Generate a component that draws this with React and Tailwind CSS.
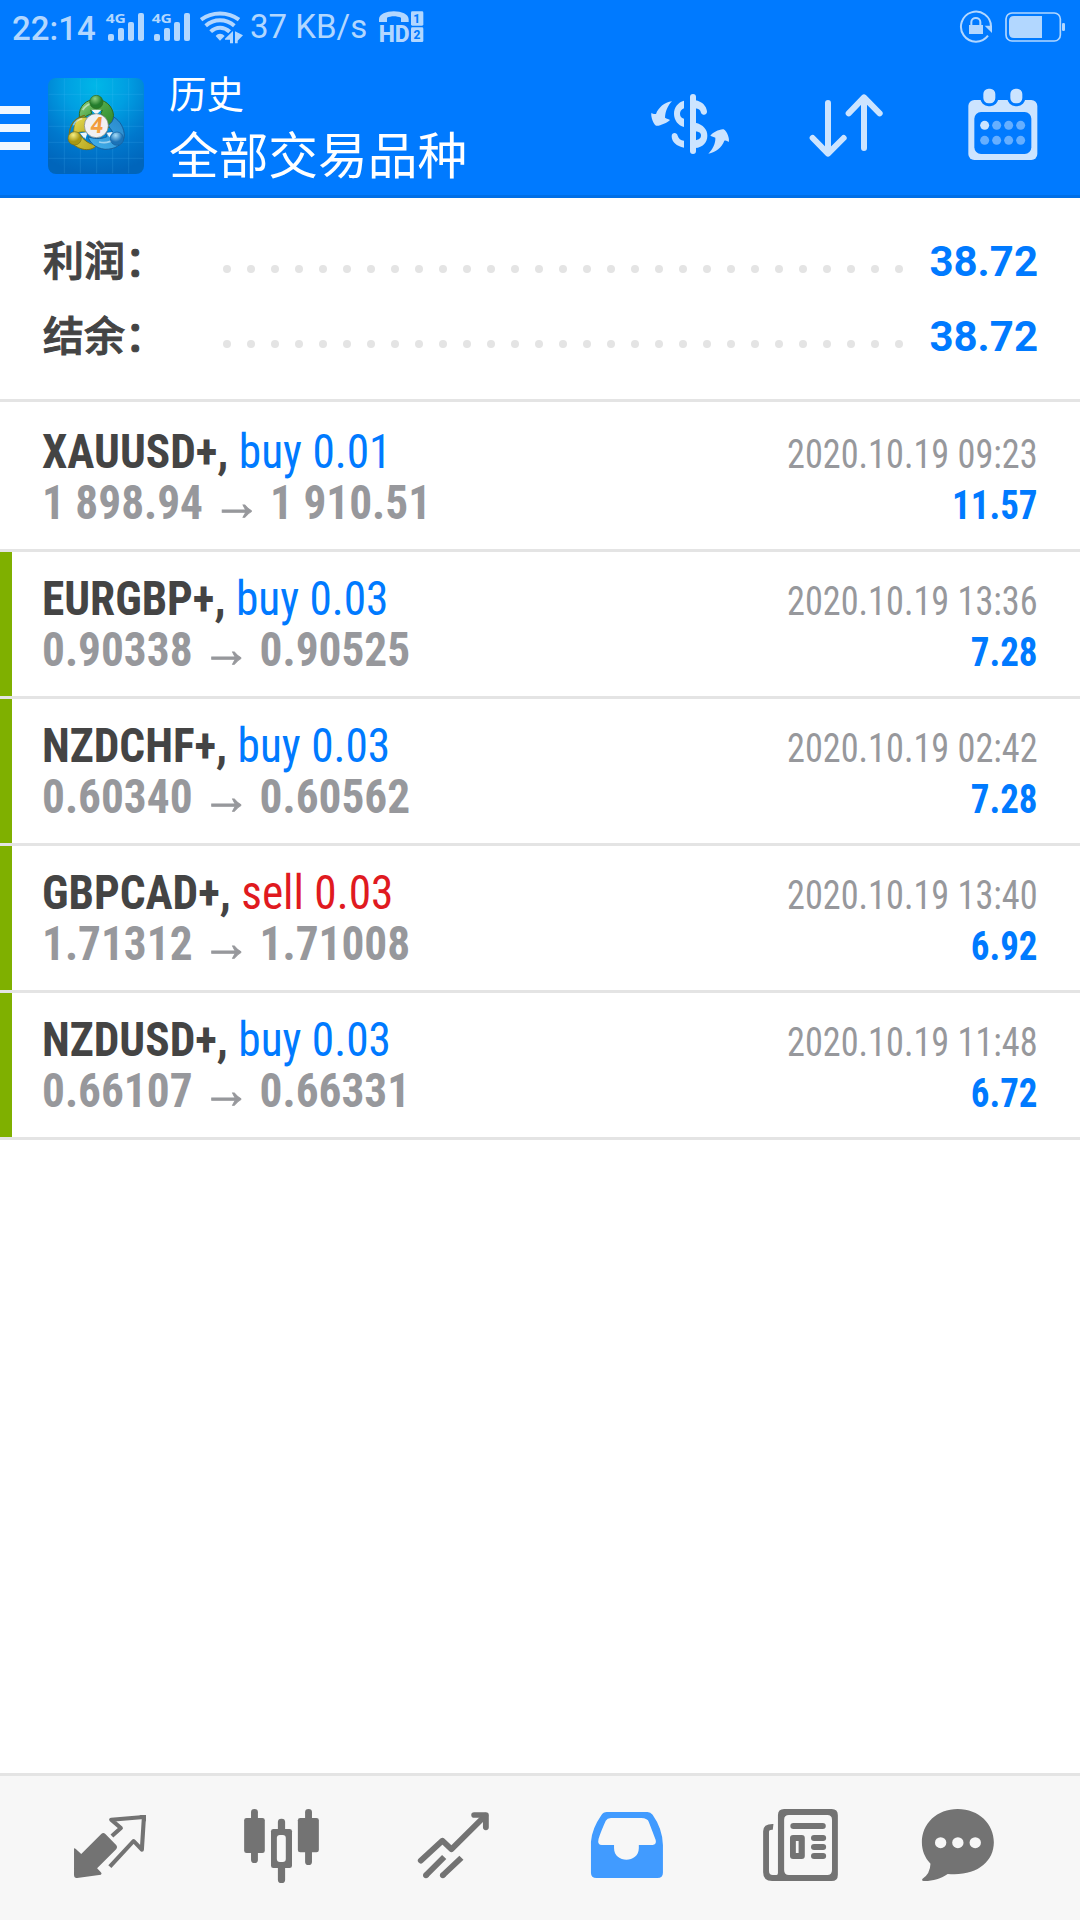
const trades = [
  { symbol: 'XAUUSD+,', side: 'buy', lot: '0.01', open: '1 898.94', close: '1 910.51', time: '2020.10.19 09:23', profit: '11.57' },
  { symbol: 'EURGBP+,', side: 'buy', lot: '0.03', open: '0.90338', close: '0.90525', time: '2020.10.19 13:36', profit: '7.28', marked: true },
  { symbol: 'NZDCHF+,', side: 'buy', lot: '0.03', open: '0.60340', close: '0.60562', time: '2020.10.19 02:42', profit: '7.28', marked: true },
  { symbol: 'GBPCAD+,', side: 'sell', lot: '0.03', open: '1.71312', close: '1.71008', time: '2020.10.19 13:40', profit: '6.92', marked: true },
  { symbol: 'NZDUSD+,', side: 'buy', lot: '0.03', open: '0.66107', close: '0.66331', time: '2020.10.19 11:48', profit: '6.72', marked: true },
];

function Signal() {
  return (
    <svg className="h-[54px] w-[46px] shrink-0" viewBox="312 0 138 162" fill="#b2d7ff">
      <text x="317" y="69" fontFamily="Open Sans" fontWeight="700" fontSize="39" textLength="61" lengthAdjust="spacingAndGlyphs">4G</text>
      <rect x="324" y="102" width="18" height="21" rx="6" />
      <rect x="354" y="84" width="18" height="39" rx="6" />
      <rect x="384" y="66" width="18" height="57" rx="6" />
      <rect x="414" y="39" width="18" height="84" rx="6" />
    </svg>
  );
}

function Wifi() {
  return (
    <svg className="h-[54px] w-[44px] shrink-0" viewBox="600 0 132 162" fill="none" stroke="#b2d7ff" strokeWidth="12">
      <path d="M603 59C636 34 684 34 717 59" />
      <path d="M617 77C643 55 677 55 703 77" />
      <path d="M632 95C649 79 671 79 689 95" />
      <path d="M647 108C655 99 665 99 674 108L660 122Z" fill="#b2d7ff" stroke="none" />
      <path d="M668 120L701 84H732V135H680V120Z" fill="#007aff" stroke="none" />
      <path d="M675 116L699 93V130H690V119H675ZM705 130V94L729 106L713 122V130Z" fill="#b2d7ff" stroke="none" />
    </svg>
  );
}

function HdCall() {
  return (
    <svg className="h-[54px] w-[46px] shrink-0" viewBox="1137 0 138 162" fill="#b2d7ff">
      <path d="M1137 66V58C1137 26 1226 26 1226 58V66H1203V53C1190 47 1173 47 1161 53V66Z" />
      <text x="1136" y="126" fontFamily="Roboto" fontWeight="800" fontSize="72" textLength="93" lengthAdjust="spacingAndGlyphs">HD</text>
      <rect x="1233" y="34" width="37" height="43" rx="4" />
      <rect x="1233" y="82" width="37" height="44" rx="4" />
      <text x="1250" y="68" textAnchor="middle" fontFamily="Roboto" fontWeight="800" fontSize="36" fill="#007aff">1</text>
      <text x="1251" y="117" textAnchor="middle" fontFamily="Roboto" fontWeight="800" fontSize="36" fill="#007aff">2</text>
    </svg>
  );
}

function RotationLock() {
  return (
    <svg className="h-[54px] w-[34px]" viewBox="57 0 102 162" fill="none" stroke="#b2d7ff">
      <path d="M153 80A45 45 0 1 0 144 107" strokeWidth="6" />
      <path d="M134 77H156V99Z" fill="#b2d7ff" stroke="none" />
      <rect x="87" y="75" width="42" height="27" fill="#b2d7ff" stroke="none" />
      <path d="M94 76V66C94 50 121 50 121 66V76" strokeWidth="6" />
    </svg>
  );
}

function Battery() {
  return (
    <svg className="h-[54px] w-[62px]" viewBox="192 0 186 162" fill="#b2d7ff">
      <rect x="198" y="39" width="163" height="84" rx="18" fill="none" stroke="#b2d7ff" strokeWidth="5" />
      <path d="M306 48V114H222Q207 114 207 99V63Q207 48 222 48Z" />
      <rect x="366" y="69" width="9" height="24" rx="4" />
    </svg>
  );
}

function AppLogo() {
  return (
    <svg className="h-24 w-24 shrink-0" viewBox="144 66 288 288">
      <defs>
        <radialGradient id="sky" cx="50%" cy="8%" r="92%">
          <stop offset="0" stopColor="#00b7e8" />
          <stop offset=".35" stopColor="#009fe2" />
          <stop offset=".7" stopColor="#0078cd" />
          <stop offset="1" stopColor="#0065bb" />
        </radialGradient>
        <linearGradient id="greenBody" x1="0" y1="0" x2="1" y2="1"><stop offset="0" stopColor="#9bd68b" /><stop offset=".45" stopColor="#4da647" /><stop offset="1" stopColor="#2c8526" /></linearGradient>
        <linearGradient id="yellowBody" x1="0" y1="0" x2="1" y2="1"><stop offset="0" stopColor="#e9df55" /><stop offset="1" stopColor="#b3a31d" /></linearGradient>
        <linearGradient id="blueBody" x1="1" y1="0" x2="0" y2="1"><stop offset="0" stopColor="#2887ca" /><stop offset="1" stopColor="#43b1ec" /></linearGradient>
        <radialGradient id="greenHead" cx="40%" cy="25%"><stop offset="0" stopColor="#8fd182" /><stop offset="1" stopColor="#247c2c" /></radialGradient>
        <radialGradient id="yellowHead" cx="40%" cy="25%"><stop offset="0" stopColor="#f5ee84" /><stop offset="1" stopColor="#a99812" /></radialGradient>
        <radialGradient id="blueHead" cx="40%" cy="25%"><stop offset="0" stopColor="#a6dcf7" /><stop offset="1" stopColor="#1b73b8" /></radialGradient>
        <linearGradient id="digit" x1="0" y1="0" x2="0" y2="1"><stop offset="0" stopColor="#ea8a2a" /><stop offset="1" stopColor="#f9ad4e" /></linearGradient>
      </defs>
      <rect x="144" y="66" width="288" height="288" rx="24" fill="url(#sky)" />
      <path d="M193 68V352M241 68V352M290 68V352M338 68V352M386 68V352M146 115H430M146 163H430M146 211H430M146 259H430M146 307H430" stroke="#5cc8ff" strokeOpacity=".16" strokeWidth="3" />
      <path d="M273 160H305L289 176ZM246 232L262 232L256 250ZM318 234L334 230L326 248Z" fill="#eef5fa" />
      <g strokeWidth="3">
        <path d="M238 184C235 149 260 130 289 130C326 132 344 162 340 188C338 203 332 211 323 216C320 198 314 182 303 173L307 163H272L276 173C264 176 257 181 250 187Z" fill="url(#greenBody)" stroke="#2f6b1d" />
        <path d="M255 178C222 187 207 207 209 240L240 235C244 244 252 251 262 258C270 264 281 266 291 266C283 279 265 284 246 279C218 271 202 251 209 224C214 200 230 183 255 178Z" fill="url(#yellowBody)" stroke="#7a7015" />
        <path d="M240 186C260 181 276 188 285 206L262 229C244 224 231 230 222 237C219 214 224 195 240 186Z" fill="url(#yellowBody)" stroke="#7a7015" strokeWidth="2" />
        <path d="M341 183C360 194 374 217 373 242C366 268 345 280 315 280C287 277 269 260 264 242C279 248 301 251 321 242L316 230L338 228C333 220 328 214 324 208C334 202 340 193 341 183Z" fill="url(#blueBody)" stroke="#155f9d" />
      </g>
      <path d="M273 161H305L289 174ZM240 232L260 229L252 246ZM320 230L338 228L328 244Z" fill="#eef5fa" />
      <path d="M297 258C318 263 333 257 343 249M248 162C257 148 268 143 276 142M220 208C226 195 235 190 247 188" fill="none" stroke="#fff" strokeOpacity=".5" strokeWidth="5" />
      <circle cx="289" cy="138" r="20" fill="url(#greenHead)" stroke="#2f6b1d" strokeWidth="2" />
      <circle cx="224" cy="247" r="20" fill="url(#yellowHead)" stroke="#7a7015" strokeWidth="2" />
      <circle cx="351" cy="248" r="20" fill="url(#blueHead)" stroke="#155f9d" strokeWidth="2" />
      <circle cx="289" cy="209" r="36" fill="#f1f0f2" stroke="#777f7a" strokeWidth="2" />
      <text transform="translate(270 232) skewX(-6)" fontFamily="Open Sans" fontWeight="700" fontSize="67" textLength="37" lengthAdjust="spacingAndGlyphs" fill="url(#digit)">4</text>
    </svg>
  );
}

function MoneyIcon() {
  return (
    <svg className="h-[130px] w-[100px]" viewBox="60 0 300 390" fill="#cce4ff">
      <rect x="210" y="72" width="18" height="180" rx="9" />
      <path d="M192 92C174 97 162 112 162 131C162 150 174 166 192 171V146C184 144 180 138 180 131C180 124 184 118 192 115Z" />
      <path d="M192 233C170 229 155 216 155 199C155 186 171 186 173 197C175 205 182 211 192 212Z" />
      <path d="M226 91C246 95 259 107 261 124C262 136 247 138 243 128C241 120 236 116 226 115Z" />
      <path d="M226 158C250 164 262 178 262 197C262 217 248 232 226 234V211C238 209 243 205 243 196C243 190 238 185 226 184Z" />
      <path d="M156 94C133 97 115 113 108 132C103 133 98 132 95 128C91 133 97 158 108 167C116 170 142 158 150 150C147 147 140 146 135 143C136 123 144 106 156 94Z" />
      <path d="M265 251C288 247 305 232 313 212C318 210 322 213 326 216C330 210 322 183 311 178C300 176 276 189 271 197C275 200 282 200 286 203C287 220 278 238 265 251Z" />
    </svg>
  );
}

function SortIcon() {
  return (
    <svg className="h-[130px] w-[100px]" viewBox="528 0 300 390" fill="none" stroke="#cce4ff" strokeWidth="18" strokeLinecap="round" strokeLinejoin="round">
      <path d="M624 99V250M578 204L624 251L671 204M732 234V83M686 130L732 82L779 130" />
    </svg>
  );
}

function CalendarIcon() {
  return (
    <svg className="h-[130px] w-[100px]" viewBox="998 0 300 390" fill="#cce4ff">
      <rect x="1044" y="90" width="207" height="180" rx="18" />
      <rect x="1062" y="126" width="171" height="126" rx="20" fill="#007aff" />
      {[1107, 1188].map((x) => (
        <rect key={x} x={x - 22.5} y="52" width="45" height="52" rx="20" stroke="#007aff" strokeWidth="9" />
      ))}
      {[166, 211].map((y) => [1093, 1129, 1165, 1201].map((x) => (
        <circle key={`${x}-${y}`} cx={x} cy={y} r="13.5" fill={x === 1093 && y === 166 ? '#cce4ff' : '#66afff'} />
      )))}
    </svg>
  );
}

function NavIcon({ x, children }) {
  return (
    <svg className="h-36 w-[172px] shrink-0" viewBox={`${x} 48 499.5 432`} preserveAspectRatio="none" fill="#737373" stroke="none">
      {children}
    </svg>
  );
}

function BottomNav() {
  return (
    <nav className="flex h-[147px] border-t-[3px] border-[#e4e4e4] bg-[#f7f7f7] pl-6">
      <NavIcon x={69.7}>
        <path d="M215 265Q218 265 221 268L236 282L294 222Q300 216 306 222L338 256Q342 261 338 267L282 325L293 337Q297 341 293 344L224 354Q215 355 215 345Z" />
        <path d="M325 228L351 204L323 179L418 171L412 269L388 243L319 320" fill="none" stroke="#737373" strokeWidth="12" strokeLinejoin="round" />
        <path d="M405 165H424V185Z" />
      </NavIcon>
      <NavIcon x={569.2}>
        <rect x="729" y="147" width="20" height="162" rx="10" />
        <rect x="709" y="174" width="60" height="105" rx="7" />
        <rect x="886" y="147" width="20" height="168" rx="10" />
        <rect x="865" y="174" width="61" height="103" rx="7" />
        <rect x="807" y="176" width="21" height="193" rx="10" />
        <rect x="787" y="207" width="61" height="117" rx="7" />
        <rect x="804" y="225" width="26" height="81" rx="9" fill="#f7f7f7" />
      </NavIcon>
      <NavIcon x={1068.7}>
        <g fill="none" stroke="#737373" strokeWidth="17" strokeLinejoin="round">
          <path d="M1222 302L1285 242L1311 268L1409 167" strokeLinecap="round" />
          <path d="M1377 165H1411V202" strokeLinecap="round" />
          <path d="M1290 291L1237 346M1340 293L1286 346" />
        </g>
        <circle cx="1237" cy="346" r="8.5" />
        <circle cx="1286" cy="346" r="8.5" />
      </NavIcon>
      <NavIcon x={0}>
        <path fill="#419bff" fillRule="evenodd" d="M194 156H312Q321 156 327 164Q356 206 357 255V338Q357 354 341 354H164Q148 354 148 338V245Q151 206 178 166Q184 156 194 156ZM206 174Q195 175 191 182C184 198 175 219 170 237Q166 255 180 255H215V264C215 311 287 311 287 264V255H327Q339 254 336 240L316 186Q313 175 294 174Z" />
      </NavIcon>
      <NavIcon x={499.5}>
        <path fillRule="evenodd" d="M709 147H847Q865 147 865 166V344Q865 363 847 363H674Q648 363 648 337V214Q648 191 678 192L676 209Q665 208 665 216V332Q665 345 676 345H687Q691 345 691 339V166Q691 147 709 147ZM723 165Q709 165 709 179V330Q709 345 723 345H834Q848 345 848 330V179Q848 165 834 165Z" />
        <rect x="727" y="189" width="103" height="18" rx="9" />
        <path fillRule="evenodd" d="M735 225H760Q769 225 769 234V288Q769 297 760 297H735Q726 297 726 288V234Q726 225 735 225ZM743 243V279H751V243Z" />
        <rect x="787" y="225" width="44" height="18" rx="9" />
        <rect x="787" y="252" width="44" height="18" rx="9" />
        <rect x="787" y="279" width="44" height="18" rx="9" />
      </NavIcon>
      <NavIcon x={999}>
        <path d="M1213 147C1275 147 1318 192 1318 247C1318 306 1267 350 1184 342C1165 356 1137 364 1114 363Q1107 361 1111 356Q1133 341 1134 311C1117 294 1109 270 1109 247C1109 190 1153 147 1213 147Z" />
        {[1163.5, 1213.5, 1264].map((cx) => <circle key={cx} cx={cx} cy="248" r="16.5" fill="#f7f7f7" />)}
      </NavIcon>
    </nav>
  );
}

function SummaryRow({ label, value }) {
  return (
    <div className="flex h-[75px] items-start pl-[43px] pr-[42px]">
      <div className="w-[180px] font-['Noto_Sans_CJK_SC',sans-serif] text-[41px] font-medium leading-[57px] whitespace-nowrap text-[#444] [-webkit-text-stroke:1px_#444]">{label}</div>
      <div className="mt-[35px] flex w-[680px] justify-between">
        {Array.from({ length: 29 }, (_, i) => <span key={i} className="size-2 rounded-full bg-[#e4e4e4]" />)}
      </div>
      <div className="ml-auto font-[Roboto,sans-serif] text-[42px] font-bold leading-[63px] text-[#007aff]">{value}</div>
    </div>
  );
}

function TradeRow({ trade }) {
  return (
    <div className="flex h-[147px] border-b-[3px] border-[#e4e4e4] font-['Roboto_Condensed',Roboto,sans-serif] [font-stretch:75%]">
      <div className={trade.marked ? 'w-3 bg-[#7fb000]' : 'w-3'} />
      <div className="flex flex-1 justify-between pl-[30px] pr-[42px] whitespace-nowrap">
        <div className="origin-left scale-x-[0.944] pt-[21px] text-[48px] leading-[51px]">
          <div>
            <span className="font-bold text-[#444]">{trade.symbol}</span>{' '}
            <span className={trade.side === 'buy' ? 'text-[#007aff]' : 'text-[#e01a1f]'}>{trade.side} {trade.lot}</span>
          </div>
          <div className="flex font-bold text-[#97989c]">
            <span>{trade.open}</span>
            <span className="mx-[10px] flex w-[51px] justify-center font-['Liberation_Sans',sans-serif] text-[52px] font-normal [-webkit-text-stroke:1px_#97989c]">→</span>
            <span>{trade.close}</span>
          </div>
        </div>
        <div className="pt-6 text-right text-[40px] leading-[51px]">
          <div className="origin-right scale-x-[0.906] text-[#97989c]">{trade.time}</div>
          <div className="origin-right scale-x-[0.925] font-bold text-[#007aff]">{trade.profit}</div>
        </div>
      </div>
    </div>
  );
}

export default function App() {
  return (
    <div className="flex h-[1920px] w-[1080px] flex-col overflow-hidden bg-white">
      <header className="h-[198px] border-b-[3px] border-[#006fe6] bg-[#007aff]">
        <div className="flex h-[54px] items-start pl-3 font-[Roboto,sans-serif] text-[#b2d7ff]">
          <div className="w-[92px] pt-[2px] text-[33px] font-medium leading-[54px]">22:14</div>
          <Signal />
          <Signal />
          <div className="ml-1"><Wifi /></div>
          <div className="ml-1.5 w-[129px] text-[33px] leading-[54px] whitespace-nowrap">37 KB/s</div>
          <HdCall />
          <div className="ml-auto flex pr-[14px]">
            <RotationLock />
            <div className="ml-[11px]"><Battery /></div>
          </div>
        </div>
        <div className="flex h-[141px]">
          <div className="mt-[52px] flex w-[30px] flex-col gap-[10px]">
            <div className="h-2 bg-[#f0f7ff]" />
            <div className="h-2 bg-[#f0f7ff]" />
            <div className="h-2 bg-[#f0f7ff]" />
          </div>
          <div className="ml-[18px] mt-6"><AppLogo /></div>
          <div className="ml-[25px] mt-[13px] font-['Noto_Sans_CJK_SC',sans-serif] text-white">
            <div className="text-[37.5px] leading-[50px]">历史</div>
            <div className="text-[49.7px] leading-[71px]">全部交易品种</div>
          </div>
          <div className="ml-auto mt-4 flex pr-[27px]">
            <MoneyIcon />
            <div className="ml-14 mr-[57px]"><SortIcon /></div>
            <CalendarIcon />
          </div>
        </div>
      </header>
      <main className="flex-1">
        <section className="h-[204px] border-b-[3px] border-[#e4e4e4] pt-8">
          <SummaryRow label="利润：" value="38.72" />
          <SummaryRow label="结余：" value="38.72" />
        </section>
        <div className="pt-[3px]">
          {trades.map((t) => <TradeRow key={t.symbol} trade={t} />)}
        </div>
      </main>
      <BottomNav />
    </div>
  );
}
